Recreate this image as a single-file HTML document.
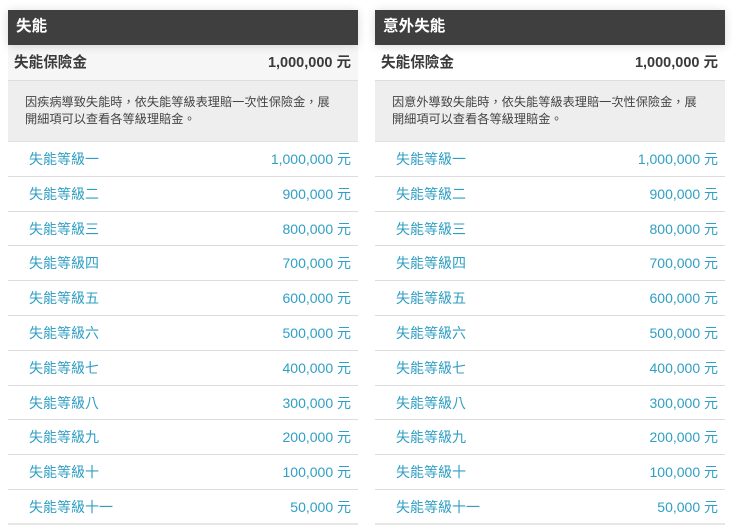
<!DOCTYPE html>
<html lang="zh-Hant">
<head>
<meta charset="utf-8">
<style>
html,body{margin:0;padding:0;background:#fff;}
body{width:740px;height:527px;overflow:hidden;position:relative;font-family:"Liberation Sans","Noto Sans CJK TC",sans-serif;}
.col{position:absolute;top:0;width:350px;height:527px;}
.hd{position:absolute;left:0;top:9.5px;width:350px;height:35px;background:#3f3f3f;box-shadow:0 1px 9px rgba(0,0,0,.15);color:#fff;font-size:15.6px;font-weight:bold;line-height:34.5px;text-indent:8px;z-index:2;}
.sum{position:absolute;left:0;top:44px;width:350px;box-sizing:border-box;height:37px;border-bottom:1px solid #ddd;font-weight:bold;color:#3a3a3a;}
.sum .l{position:absolute;left:6px;top:8.6px;font-size:14.6px;line-height:20px;}
.sum .r{position:absolute;right:7px;top:8.6px;font-size:14.5px;line-height:20px;}
.desc{position:absolute;left:0;top:81px;width:350px;height:61px;background:#eeeeee;box-sizing:border-box;padding:13px 0 0 17px;font-size:12.2px;line-height:17px;color:#444;border-bottom:1px solid #e2e2e2;}
.row{position:absolute;left:0;width:350px;height:34.8px;box-sizing:border-box;border-bottom:1px solid #dcdcdc;color:#2f9fc4;font-size:14px;line-height:34px;}
.row .l{position:absolute;left:21px;top:0;}
.row .r{position:absolute;right:7px;top:0;}
</style>
</head>
<body>
<div class="col" style="left:8px;">
<div class="hd">失能</div>
<div class="sum" style="background:#f6f6f6;"><span class="l">失能保險金</span><span class="r">1,000,000 元</span></div>
<div class="desc">因疾病導致失能時，依失能等級表理賠一次性保險金，展<br>開細項可以查看各等級理賠金。</div>
<div class="row" style="top:142px;"><span class="l">失能等級一</span><span class="r">1,000,000 元</span></div>
<div class="row" style="top:176.8px;"><span class="l">失能等級二</span><span class="r">900,000 元</span></div>
<div class="row" style="top:211.6px;"><span class="l">失能等級三</span><span class="r">800,000 元</span></div>
<div class="row" style="top:246.4px;"><span class="l">失能等級四</span><span class="r">700,000 元</span></div>
<div class="row" style="top:281.2px;"><span class="l">失能等級五</span><span class="r">600,000 元</span></div>
<div class="row" style="top:316px;"><span class="l">失能等級六</span><span class="r">500,000 元</span></div>
<div class="row" style="top:350.8px;"><span class="l">失能等級七</span><span class="r">400,000 元</span></div>
<div class="row" style="top:385.6px;"><span class="l">失能等級八</span><span class="r">300,000 元</span></div>
<div class="row" style="top:420.4px;"><span class="l">失能等級九</span><span class="r">200,000 元</span></div>
<div class="row" style="top:455.2px;"><span class="l">失能等級十</span><span class="r">100,000 元</span></div>
<div class="row" style="top:490px;border-bottom:2px solid #e6e6e6;"><span class="l">失能等級十一</span><span class="r">50,000 元</span></div>
</div>
<div class="col" style="left:375px;">
<div class="hd">意外失能</div>
<div class="sum" style="background:#fff;"><span class="l">失能保險金</span><span class="r">1,000,000 元</span></div>
<div class="desc">因意外導致失能時，依失能等級表理賠一次性保險金，展<br>開細項可以查看各等級理賠金。</div>
<div class="row" style="top:142px;"><span class="l">失能等級一</span><span class="r">1,000,000 元</span></div>
<div class="row" style="top:176.8px;"><span class="l">失能等級二</span><span class="r">900,000 元</span></div>
<div class="row" style="top:211.6px;"><span class="l">失能等級三</span><span class="r">800,000 元</span></div>
<div class="row" style="top:246.4px;"><span class="l">失能等級四</span><span class="r">700,000 元</span></div>
<div class="row" style="top:281.2px;"><span class="l">失能等級五</span><span class="r">600,000 元</span></div>
<div class="row" style="top:316px;"><span class="l">失能等級六</span><span class="r">500,000 元</span></div>
<div class="row" style="top:350.8px;"><span class="l">失能等級七</span><span class="r">400,000 元</span></div>
<div class="row" style="top:385.6px;"><span class="l">失能等級八</span><span class="r">300,000 元</span></div>
<div class="row" style="top:420.4px;"><span class="l">失能等級九</span><span class="r">200,000 元</span></div>
<div class="row" style="top:455.2px;"><span class="l">失能等級十</span><span class="r">100,000 元</span></div>
<div class="row" style="top:490px;border-bottom:2px solid #e6e6e6;"><span class="l">失能等級十一</span><span class="r">50,000 元</span></div>
</div>
</body>
</html>
